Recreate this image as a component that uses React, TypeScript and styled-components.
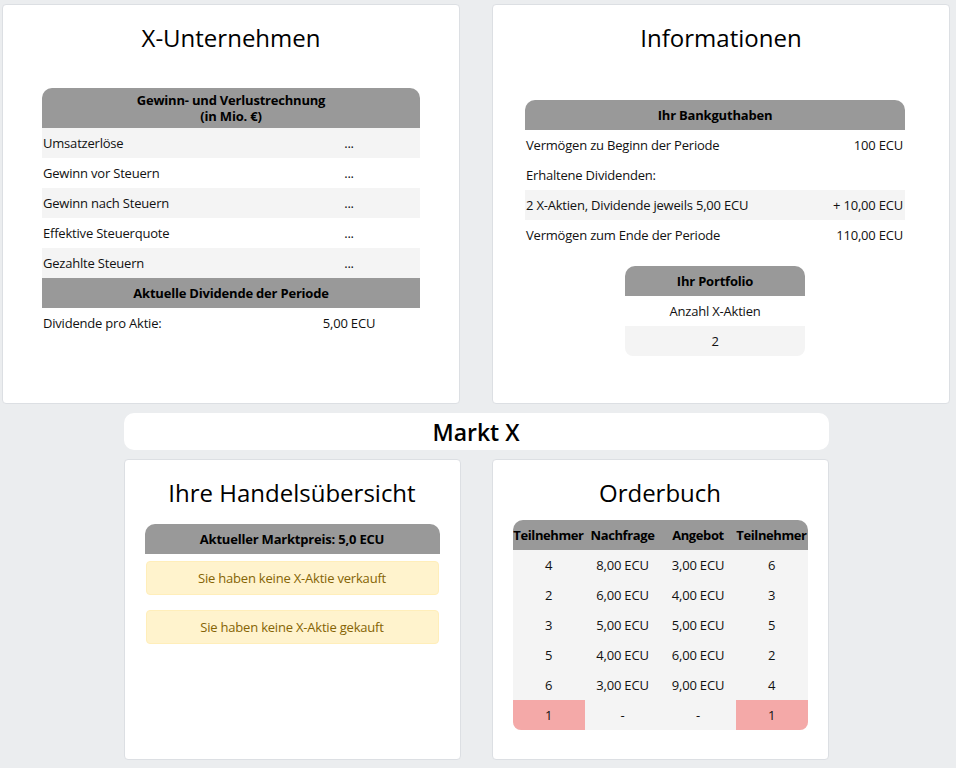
import React from "react";
import styled, { createGlobalStyle } from "styled-components";

const Global = createGlobalStyle`
  html, body { margin: 0; padding: 0; background: #ebedef; }
  body {
    font-family: "Open Sans", "Noto Sans", sans-serif;
    font-size: 13px;
    letter-spacing: -0.2px;
    color: #111;
  }
  * { box-sizing: border-box; }
`;

const Page = styled.div`
  width: 956px;
  padding: 4px 6px 8px 2px;
  display: flex;
  flex-direction: column;
  align-items: center;
`;

const TopRow = styled.div`
  display: flex;
  gap: 32px;
`;

const BottomRow = styled.div`
  display: flex;
  gap: 31px;
  margin-top: 9px;
`;

const Card = styled.section<{ $w: number; $h: number }>`
  width: ${(p) => p.$w}px;
  height: ${(p) => p.$h}px;
  background: #fff;
  border: 1px solid #dcdfe3;
  border-radius: 4px;
  padding-top: 17px;
  display: flex;
  flex-direction: column;
  align-items: center;
`;

const Title = styled.h3<{ $gap: number }>`
  margin: 0 0 ${(p) => p.$gap}px 0;
  font-size: 24px;
  line-height: 32px;
  font-weight: 500;
  letter-spacing: 0;
  text-align: center;
  color: #000;
`;

const MarketBar = styled.div`
  margin-top: 9px;
  width: 705px;
  height: 37px;
  background: #fff;
  border-radius: 10px;
  display: flex;
  align-items: center;
  justify-content: center;
  font-size: 23px;
  font-weight: 600;
  letter-spacing: 0;
  color: #000;
`;

const Table = styled.div<{ $w: number }>`
  width: ${(p) => p.$w}px;
  display: flex;
  flex-direction: column;
  border-radius: 10px 10px 8px 8px;
  overflow: hidden;
`;

const HeadCell = styled.div<{ $lines?: number }>`
  background: #999999;
  color: #000;
  font-weight: 700;
  text-align: center;
  line-height: 16px;
  min-height: 30px;
  padding: ${(p) => (p.$lines === 2 ? "4px 0" : "7px 0")};
  white-space: pre-line;
`;

const Row = styled.div<{ $shade?: boolean; $cols: string }>`
  display: grid;
  grid-template-columns: ${(p) => p.$cols};
  height: 30px;
  align-items: center;
  background: ${(p) => (p.$shade ? "#f4f4f4" : "#fff")};
`;

const Label = styled.div`
  padding-left: 1px;
  white-space: nowrap;
`;

const Value = styled.div<{ $align?: "center" | "right" }>`
  text-align: ${(p) => p.$align || "center"};
  padding-right: ${(p) => (p.$align === "right" ? "2px" : "0")};
  white-space: nowrap;
`;

const Portfolio = styled.div`
  width: 180px;
  margin-top: 16px;
  margin-right: 12px;
  border-radius: 10px 10px 8px 8px;
  overflow: hidden;
  display: flex;
  flex-direction: column;
`;

const Centered = styled.div<{ $shade?: boolean }>`
  height: 30px;
  display: flex;
  align-items: center;
  justify-content: center;
  background: ${(p) => (p.$shade ? "#f4f4f4" : "#fff")};
`;

const PriceBar = styled.div`
  width: 295px;
  height: 30px;
  background: #999999;
  border-radius: 10px 10px 0 0;
  font-weight: 700;
  display: flex;
  align-items: center;
  justify-content: center;
  color: #000;
`;

const Alert = styled.div<{ $gap: number }>`
  width: 293px;
  height: 34px;
  margin-top: ${(p) => p.$gap}px;
  background: #fff3cd;
  border: 1px solid #ffeeba;
  border-radius: 4px;
  color: #856404;
  display: flex;
  align-items: center;
  justify-content: center;
`;

const OBTable = styled.div`
  width: 295px;
  border-radius: 10px 10px 8px 8px;
  overflow: hidden;
`;

const OBRow = styled.div<{ $head?: boolean }>`
  display: grid;
  grid-template-columns: 72px 76px 75px 72px;
  height: 30px;
  background: ${(p) => (p.$head ? "#999999" : "#f4f4f4")};
  font-weight: ${(p) => (p.$head ? 700 : 400)};
  letter-spacing: ${(p) => (p.$head ? "-0.4px" : "-0.2px")};
  color: ${(p) => (p.$head ? "#000" : "#111")};
`;

const OBCell = styled.div<{ $hl?: boolean }>`
  display: flex;
  align-items: center;
  justify-content: center;
  white-space: nowrap;
  background: ${(p) => (p.$hl ? "#f4a9a8" : "transparent")};
`;

const Wrap = styled.div<{ $shift: number }>`
  display: flex;
  flex-direction: column;
  align-items: center;
  margin-right: ${(p) => p.$shift}px;
`;

const guv = [
  "Umsatzerlöse",
  "Gewinn vor Steuern",
  "Gewinn nach Steuern",
  "Effektive Steuerquote",
  "Gezahlte Steuern",
];

const orders = [
  ["4", "8,00 ECU", "3,00 ECU", "6"],
  ["2", "6,00 ECU", "4,00 ECU", "3"],
  ["3", "5,00 ECU", "5,00 ECU", "5"],
  ["5", "4,00 ECU", "6,00 ECU", "2"],
  ["6", "3,00 ECU", "9,00 ECU", "4"],
];

export default function App() {
  return (
    <>
      <Global />
      <Page>
        <TopRow>
          <Card $w={458} $h={400}>
            <Title $gap={34}>X-Unternehmen</Title>
            <Table $w={378}>
              <HeadCell $lines={2}>{"Gewinn- und Verlustrechnung\n(in Mio. €)"}</HeadCell>
              {guv.map((l, i) => (
                <Row key={l} $shade={i % 2 === 0} $cols="236px 1fr">
                  <Label>{l}</Label>
                  <Value>...</Value>
                </Row>
              ))}
              <HeadCell>Aktuelle Dividende der Periode</HeadCell>
              <Row $cols="236px 1fr">
                <Label>Dividende pro Aktie:</Label>
                <Value>5,00 ECU</Value>
              </Row>
            </Table>
          </Card>
          <Card $w={458} $h={400}>
            <Title $gap={46}>Informationen</Title>
            <Wrap $shift={12}>
              <Table $w={380}>
                <HeadCell>Ihr Bankguthaben</HeadCell>
                <Row $cols="1fr auto">
                  <Label>Vermögen zu Beginn der Periode</Label>
                  <Value $align="right">100 ECU</Value>
                </Row>
                <Row $cols="1fr auto">
                  <Label>Erhaltene Dividenden:</Label>
                  <Value $align="right"></Value>
                </Row>
                <Row $shade $cols="1fr auto">
                  <Label>2 X-Aktien, Dividende jeweils 5,00 ECU</Label>
                  <Value $align="right">+ 10,00 ECU</Value>
                </Row>
                <Row $cols="1fr auto">
                  <Label>Vermögen zum Ende der Periode</Label>
                  <Value $align="right">110,00 ECU</Value>
                </Row>
              </Table>
            </Wrap>
            <Portfolio>
              <HeadCell>Ihr Portfolio</HeadCell>
              <Centered>Anzahl X-Aktien</Centered>
              <Centered $shade>2</Centered>
            </Portfolio>
          </Card>
        </TopRow>
        <MarketBar>Markt X</MarketBar>
        <BottomRow>
          <Card $w={337} $h={301}>
            <Title $gap={15}>Ihre Handelsübersicht</Title>
            <PriceBar>Aktueller Marktpreis: 5,0 ECU</PriceBar>
            <Alert $gap={7}>Sie haben keine X-Aktie verkauft</Alert>
            <Alert $gap={15}>Sie haben keine X-Aktie gekauft</Alert>
          </Card>
          <Card $w={337} $h={301}>
            <Title $gap={11}>Orderbuch</Title>
            <OBTable>
              <OBRow $head>
                <OBCell>Teilnehmer</OBCell>
                <OBCell>Nachfrage</OBCell>
                <OBCell>Angebot</OBCell>
                <OBCell>Teilnehmer</OBCell>
              </OBRow>
              {orders.map((r, i) => (
                <OBRow key={i}>
                  {r.map((c, j) => (
                    <OBCell key={j}>{c}</OBCell>
                  ))}
                </OBRow>
              ))}
              <OBRow>
                <OBCell $hl>1</OBCell>
                <OBCell>-</OBCell>
                <OBCell>-</OBCell>
                <OBCell $hl>1</OBCell>
              </OBRow>
            </OBTable>
          </Card>
        </BottomRow>
      </Page>
    </>
  );
}
